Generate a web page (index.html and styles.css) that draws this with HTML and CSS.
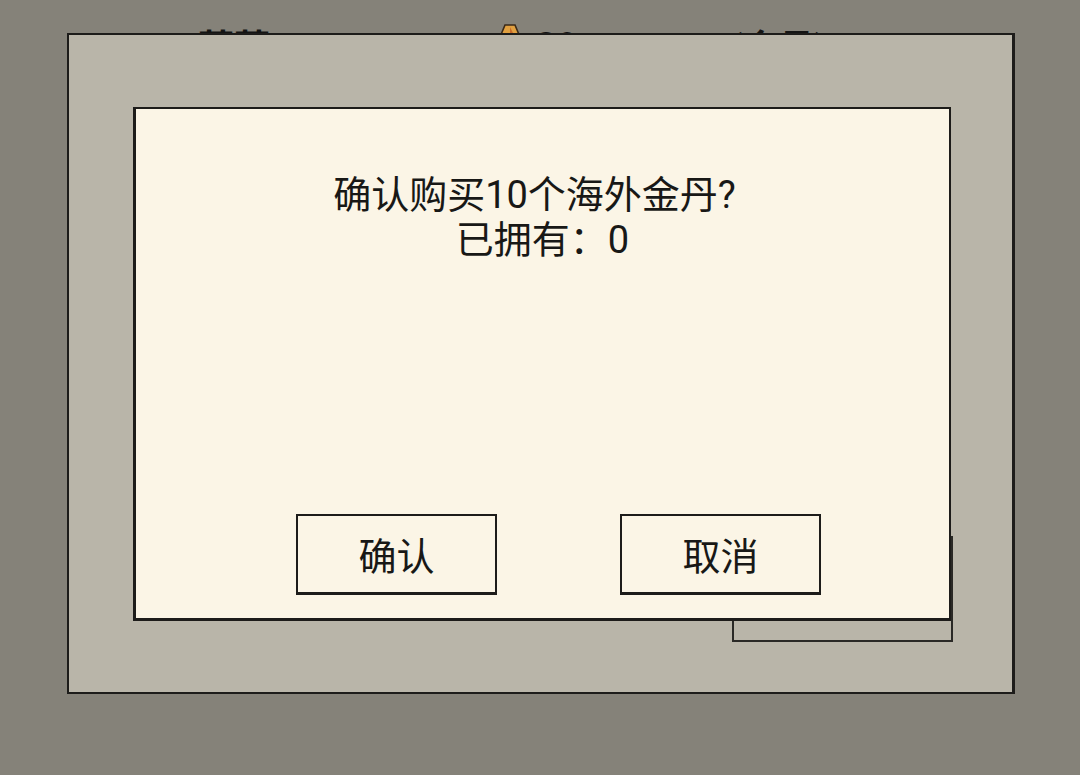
FILE: index.html
```html
<!DOCTYPE html>
<html lang="zh-CN">
<head>
<meta charset="utf-8">
<title>商店</title>
<link rel="stylesheet" href="styles.css">
</head>
<body>
<div class="screen">
  <header class="topbar">
    <span class="name">蒂蒂</span>
    <span class="coins">
      <svg class="coin" viewBox="0 0 24 24" width="24" height="24">
        <path d="M7 2 L17 2 L22 14 L12 22 L2 14 Z" fill="#e0a040" stroke="#3a2a1a" stroke-width="1.6"/>
        <path d="M12 4 L17 14 L12 20 Z" fill="#c86a2a"/>
      </svg>
      <span class="count">30</span>
    </span>
    <span class="unit">(金丹)</span>
  </header>

  <section class="shop">
    <div class="shop-action"></div>

    <div class="dialog" role="dialog">
      <p class="message">
        <span class="line question">确认购买10个海外金丹?</span>
        <span class="line">已拥有：0</span>
      </p>
      <div class="actions">
        <button class="btn">确认</button>
        <button class="btn">取消</button>
      </div>
    </div>
  </section>
</div>
</body>
</html>
```

FILE: styles.css
```css
* { box-sizing: border-box; }

html, body {
  margin: 0;
  padding: 0;
  width: 1080px;
  height: 775px;
  overflow: hidden;
  background: #858279;
  font-family: "Roboto", "Noto Sans CJK SC", sans-serif;
  color: #181816;
}

.screen {
  position: relative;
  width: 1080px;
  height: 775px;
}

/* resource bar, mostly covered by the shop window */
.topbar {
  display: flex;
  align-items: flex-start;
  height: 60px;
  padding: 31px 0 0 198px;
  font-size: 36px;
  line-height: 36px;
  color: #141414;
}
.name { width: 300px; font-weight: 700; }
.coins { display: flex; align-items: flex-start; gap: 14px; width: 232px; }
.coin { margin-top: -8px; }
.count { font-weight: 700; margin-top: -3px; }
.unit { font-weight: 700; }

/* shop window */
.shop {
  position: absolute;
  left: 67px;
  top: 33px;
  width: 948px;
  height: 661px;
  background: #b9b5a9;
  border: 2px solid #1d1c1a;
  border-right-width: 3px;
  display: flex;
  flex-direction: column;
  justify-content: flex-end;
  align-items: flex-end;
  padding: 0 59px 50px 0;
}

.shop-action {
  width: 221px;
  height: 106px;
  border: 2px solid #2a2926;
  background: #b9b5a9;
}

/* confirmation dialog */
.dialog {
  position: absolute;
  left: 64px;
  top: 72px;
  width: 818px;
  height: 514px;
  background: #fbf5e6;
  border: 2px solid #1d1c1a;
  border-left-width: 3px;
  border-bottom-width: 3px;
  display: flex;
  flex-direction: column;
  justify-content: space-between;
  padding: 64px 0 23px 0;
}

.message {
  margin: 0;
  display: flex;
  flex-direction: column;
  align-items: center;
  font-size: 38px;
  line-height: 45px;
  color: #181816;
}
.question { padding-right: 16px; }

.actions {
  display: flex;
  gap: 123px;
  padding-left: 160px;
}

.btn {
  width: 201px;
  height: 81px;
  background: #fbf5e6;
  border: 2px solid #1d1c1a;
  border-bottom-width: 3px;
  font-family: "Roboto", "Noto Sans CJK SC", sans-serif;
  font-size: 38px;
  color: #181816;
  padding: 0 0 2px 0;
}
```
